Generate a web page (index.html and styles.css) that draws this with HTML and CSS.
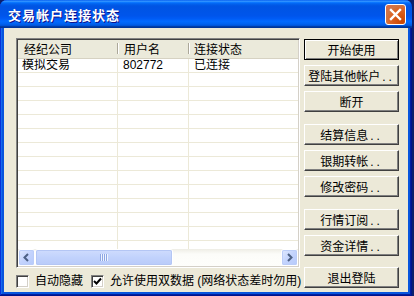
FILE: index.html
```html
<!DOCTYPE html>
<html lang="zh-CN">
<head>
    <meta charset="UTF-8">
    <meta name="viewport" content="width=device-width, initial-scale=1.0">
    <title>交易帐户连接状态</title>
    <link rel="stylesheet" href="styles.css">
</head>
<body>
    <div class="window">
        <div class="titlebar">
            <span class="title">交易帐户连接状态</span>
            <button class="close-btn" aria-label="关闭">
                <svg width="13" height="13" viewBox="0 0 13 13">
                    <path d="M2 2 L11 11 M11 2 L2 11" stroke="#fff" stroke-width="2.4" stroke-linecap="square"/>
                </svg>
            </button>
        </div>

        <div class="client">
            <div class="main-col">
                <div class="listview">
                    <div class="list-header">
                        <div class="hcol col-broker">经纪公司</div>
                        <div class="hcol col-user">用户名</div>
                        <div class="hcol col-status">连接状态</div>
                    </div>
                    <div class="list-body">
                        <div class="row">
                            <div class="cell col-broker">模拟交易</div>
                            <div class="cell col-user">802772</div>
                            <div class="cell col-status">已连接</div>
                        </div>
                        <div class="row"><div class="cell col-broker"></div><div class="cell col-user"></div><div class="cell col-status"></div></div>
                        <div class="row"><div class="cell col-broker"></div><div class="cell col-user"></div><div class="cell col-status"></div></div>
                        <div class="row"><div class="cell col-broker"></div><div class="cell col-user"></div><div class="cell col-status"></div></div>
                        <div class="row"><div class="cell col-broker"></div><div class="cell col-user"></div><div class="cell col-status"></div></div>
                        <div class="row"><div class="cell col-broker"></div><div class="cell col-user"></div><div class="cell col-status"></div></div>
                        <div class="row"><div class="cell col-broker"></div><div class="cell col-user"></div><div class="cell col-status"></div></div>
                        <div class="row"><div class="cell col-broker"></div><div class="cell col-user"></div><div class="cell col-status"></div></div>
                        <div class="row"><div class="cell col-broker"></div><div class="cell col-user"></div><div class="cell col-status"></div></div>
                        <div class="row"><div class="cell col-broker"></div><div class="cell col-user"></div><div class="cell col-status"></div></div>
                        <div class="row"><div class="cell col-broker"></div><div class="cell col-user"></div><div class="cell col-status"></div></div>
                        <div class="row"><div class="cell col-broker"></div><div class="cell col-user"></div><div class="cell col-status"></div></div>
                        <div class="row"><div class="cell col-broker"></div><div class="cell col-user"></div><div class="cell col-status"></div></div>
                        <div class="row"><div class="cell col-broker"></div><div class="cell col-user"></div><div class="cell col-status"></div></div>
                        <div class="row"><div class="cell col-broker"></div><div class="cell col-user"></div><div class="cell col-status"></div></div>
                    </div>
                    <div class="hscroll">
                        <div class="sb-btn">
                            <svg width="9" height="9" viewBox="0 0 9 9">
                                <path d="M6 1 L2.5 4.5 L6 8" fill="none" stroke="#4D6185" stroke-width="2"/>
                            </svg>
                        </div>
                        <div class="sb-track">
                            <div class="sb-thumb"><span class="grip"></span></div>
                        </div>
                        <div class="sb-btn">
                            <svg width="9" height="9" viewBox="0 0 9 9">
                                <path d="M3 1 L6.5 4.5 L3 8" fill="none" stroke="#4D6185" stroke-width="2"/>
                            </svg>
                        </div>
                    </div>
                </div>

                <div class="options">
                    <label class="check"><span class="box"></span>自动隐藏</label>
                    <label class="check">
                        <span class="box">
                            <svg width="9" height="9" viewBox="0 0 9 9">
                                <path d="M1 4 L3.5 6.5 L8 1.5" fill="none" stroke="#000" stroke-width="2"/>
                            </svg>
                        </span>允许使用双数据 (网络状态差时勿用)
                    </label>
                </div>
            </div>

            <div class="actions">
                <button class="btn btn-default">开始使用</button>
                <button class="btn">登陆其他帐户<span class="dots">..</span></button>
                <button class="btn">断开</button>
                <button class="btn group-start">结算信息<span class="dots">..</span></button>
                <button class="btn">银期转帐<span class="dots">..</span></button>
                <button class="btn">修改密码<span class="dots">..</span></button>
                <button class="btn group-start">行情订阅<span class="dots">..</span></button>
                <button class="btn">资金详情<span class="dots">..</span></button>
                <button class="btn btn-exit">退出登陆</button>
            </div>
        </div>
    </div>
</body>
</html>
```

FILE: styles.css
```css
body {
    margin: 0;
    padding: 0;
    background-color: #0c1f6b;
    font-family: "Liberation Sans", "Noto Sans CJK SC", sans-serif;
    font-size: 12px;
    color: #000;
    overflow: hidden;
}

.window {
    width: 412px;
    height: 296px;
    display: flex;
    flex-direction: column;
    background-color: #0855dd;
    border-radius: 7px 7px 0 0;
    box-shadow: inset -1px -1px #00138c, inset 1px 1px #0831d9,
                inset -2px -2px #001ea0, inset 2px 2px #166aee;
    overflow: hidden;
}

/* barre de titre facon XP */
.titlebar {
    height: 28px;
    flex-shrink: 0;
    display: flex;
    align-items: center;
    justify-content: space-between;
    padding: 0 6px 0 8px;
    background: linear-gradient(to bottom, #0058ee 0%, #3593ff 4%, #288eff 6%, #127dff 8%,
        #036ffc 10%, #0262ee 14%, #0057e5 20%, #0054e3 24%, #0055eb 56%, #005bf5 66%,
        #026afe 76%, #0062ef 86%, #0052d6 92%, #0040ab 94%, #003092 100%);
}

.title {
    color: #fff;
    font-family: "Noto Sans CJK SC", sans-serif;
    font-weight: bold;
    font-size: 13px;
    letter-spacing: 1px;
    text-shadow: 1px 1px #0f1089;
}

.close-btn {
    width: 21px;
    height: 21px;
    padding: 0;
    border: 1px solid #fff;
    border-radius: 3px;
    background: radial-gradient(circle at 85% 85%, #cc4600 0%, #dc6527 55%, #cd7546 70%, #e26b4a 100%);
    display: flex;
    align-items: center;
    justify-content: center;
}

.client {
    flex: 1;
    margin: 0 4px 4px 4px;
    background-color: #ece9d8;
    display: flex;
    padding: 10px 9px 4px 12px;
    gap: 4px;
}

.main-col {
    width: 284px;
    display: flex;
    flex-direction: column;
}

/* liste des comptes */
.listview {
    height: 230px;
    box-sizing: border-box;
    border: 1px solid;
    border-color: #828282 #fff #fff #828282;
    box-shadow: inset 1px 1px #404040, inset -1px -1px #d4d0c8;
    padding: 1px;
    background-color: #fff;
    display: flex;
    flex-direction: column;
}

.list-header {
    height: 19px;
    box-sizing: border-box;
    flex-shrink: 0;
    display: flex;
    background-color: #ebeadb;
    border-bottom: 1px solid #d6d2c2;
}

.hcol {
    position: relative;
    display: flex;
    align-items: center;
    padding: 0 0 2px 6px;
    box-sizing: border-box;
}

.hcol::after {
    content: "";
    position: absolute;
    right: 0;
    top: 3px;
    bottom: 4px;
    width: 1px;
    background-color: #aca899;
    box-shadow: 1px 0 #fff;
}

.col-broker {
    width: 100px;
    flex-shrink: 0;
}

.col-user {
    width: 71px;
    flex-shrink: 0;
}

.col-status {
    flex: 1;
}

.hcol.col-status {
    padding-left: 5px;
}

.hcol.col-status::after {
    display: none;
}

.list-body {
    height: 190px;
    overflow: hidden;
}

.row {
    display: flex;
    height: 13px;
    border-bottom: 1px solid #ece9d8;
}

.cell {
    box-sizing: border-box;
    height: 13px;
    line-height: 13px;
    padding-left: 5px;
    border-right: 1px solid #ece9d8;
    white-space: nowrap;
}

.cell.col-broker {
    padding-left: 4px;
}

.cell.col-status {
    border-right: none;
}

/* barre de defilement */
.hscroll {
    height: 17px;
    flex-shrink: 0;
    display: flex;
    background: linear-gradient(to bottom, #eeede5 0%, #fcfcf9 30%, #fefefb 100%);
}

.sb-btn {
    width: 15px;
    height: 15px;
    margin: 1px;
    border-radius: 2px;
    background: linear-gradient(135deg, #e1eafe 0%, #c3d3fd 50%, #b6cafb 100%);
    box-shadow: 0 0 0 1px #fff, inset 0 0 0 1px #bbcdf8;
    display: flex;
    align-items: center;
    justify-content: center;
}

.sb-track {
    flex: 1;
    display: flex;
}

.sb-thumb {
    width: 136px;
    margin: 1px 0 1px 1px;
    border-radius: 2px;
    background: linear-gradient(to bottom, #cfdcfd 0%, #c1d2fc 50%, #b9cbf9 100%);
    box-shadow: 0 0 0 1px #fff, inset 0 0 0 1px #b4c6f4;
    display: flex;
    align-items: center;
    justify-content: center;
}

.grip {
    width: 8px;
    height: 7px;
    background: repeating-linear-gradient(to right, #8ea6e4 0, #8ea6e4 1px, #eef4fe 1px, #eef4fe 2px);
}

/* cases a cocher */
.options {
    margin-top: 7px;
    height: 13px;
    display: flex;
    align-items: center;
    gap: 8px;
    white-space: nowrap;
}

.check {
    display: flex;
    align-items: center;
    gap: 6px;
    line-height: 13px;
}

.box {
    width: 13px;
    height: 13px;
    box-sizing: border-box;
    background-color: #fff;
    border: 1px solid;
    border-color: #808080 #fff #fff #808080;
    box-shadow: inset 1px 1px #404040, inset -1px -1px #d4d0c8;
    display: flex;
    align-items: center;
    justify-content: center;
}

/* boutons */
.actions {
    width: 95px;
    display: flex;
    flex-direction: column;
    padding-top: 1px;
}

.btn {
    height: 21px;
    padding: 0;
    font-family: inherit;
    font-size: 12px;
    color: #000;
    background-color: #ece9d8;
    border: 1px solid;
    border-color: #fff #404040 #404040 #fff;
    box-shadow: inset -1px -1px #808080;
    white-space: nowrap;
}

.btn + .btn {
    margin-top: 5px;
}

.btn.group-start {
    margin-top: 12px;
}

.btn.btn-exit {
    margin-top: auto;
}

.btn-default {
    border-color: #000;
    box-shadow: inset 1px 1px #fff, inset -1px -1px #808080;
}

.dots {
    letter-spacing: 3px;
    margin-left: 2px;
}
```
